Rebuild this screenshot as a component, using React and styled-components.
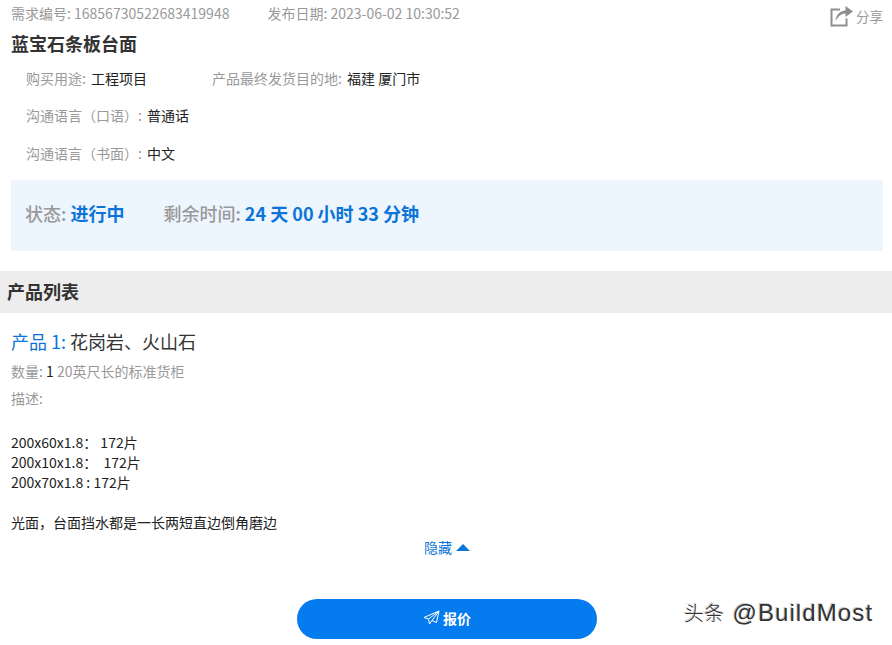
import React from "react";
import styled, { createGlobalStyle } from "styled-components";

const GlobalStyle = createGlobalStyle`
  html, body {
    margin: 0;
    padding: 0;
    background: #fff;
  }
  body {
    font-family: "Noto Sans CJK SC", "Noto Sans", sans-serif;
    overflow: hidden;
  }
`;

function ShareIcon() {
  return (
    <svg width="23" height="22" viewBox="0 0 23 22" fill="none">
      <path d="M10 4.500H1.500v16h15v-7" stroke="#8f8f8f" strokeWidth="2" />
      <path d="M5.500 16c.5-6 4-10 10-10.500V1L23 6.500l-7.500 5.500V8.500c-4 0-7.500 3-10 7.500z" fill="#8f8f8f" />
    </svg>
  );
}

function PlaneIcon() {
  return (
    <svg width="17" height="15" viewBox="0 0 17 15" fill="none" stroke="#fff" strokeWidth="1" strokeLinejoin="round">
      <path d="M16 1L1 7.500l4.500 1.500L16 1zM16 1l-2.500 11.500L9 10.500 6.500 14 5.500 9" />
      <path d="M9 10.500L16 1" />
    </svg>
  );
}

function App() {
  return (
    <Page>
      <GlobalStyle />
      <TopBar>
        <span>需求编号: 16856730522683419948</span>
        <span>发布日期: 2023-06-02 10:30:52</span>
        <ShareButton>
          <ShareIcon />
          分享
        </ShareButton>
      </TopBar>
      <Title>蓝宝石条板台面</Title>
      <InfoRow>
        <InfoItem $width="186px">
          购买用途: <strong>工程项目</strong>
        </InfoItem>
        <InfoItem>
          产品最终发货目的地: <strong>福建 厦门市</strong>
        </InfoItem>
      </InfoRow>
      <InfoRow>
        <InfoItem>
          沟通语言（口语）: <strong>普通话</strong>
        </InfoItem>
      </InfoRow>
      <InfoRow>
        <InfoItem>
          沟通语言（书面）: <strong>中文</strong>
        </InfoItem>
      </InfoRow>
      <StatusBox>
        <StatusItem>
          状态: <b>进行中</b>
        </StatusItem>
        <StatusItem>
          剩余时间: <b>24 天 00 小时 33 分钟</b>
        </StatusItem>
      </StatusBox>
      <SectionHeader>产品列表</SectionHeader>
      <Product>
        <ProductName>
          <em>产品 1:</em> 花岗岩、火山石
        </ProductName>
        <Quantity>
          数量: <strong>1</strong> 20英尺长的标准货柜
        </Quantity>
        <Quantity>描述:</Quantity>
        <Description>
          <p>
            200x60x1.8： 172片
            <br />
            200x10x1.8：&nbsp; 172片
            <br />
            200x70x1.8 : 172片
          </p>
          <p>光面，台面挡水都是一长两短直边倒角磨边</p>
        </Description>
      </Product>
      <HideToggle>
        隐藏 <Caret />
      </HideToggle>
      <QuoteRow>
        <QuoteButton>
          <PlaneIcon />
          报价
        </QuoteButton>
      </QuoteRow>
      <Watermark>
        头条 <WatermarkHandle>@BuildMost</WatermarkHandle>
      </Watermark>
    </Page>
  );
}

export default App;

const Page = styled.div`
  position: relative;
  width: 892px;
  height: 645px;
  overflow: hidden;
  background: #fff;
`;

const TopBar = styled.div`
  display: flex;
  gap: 38px;
  height: 26px;
  padding: 0 11px;
  align-items: center;
  font-size: 14px;
  color: #999;
  white-space: nowrap;
`;

const ShareButton = styled.div`
  display: flex;
  align-items: center;
  gap: 3px;
  margin-left: auto;
  margin-right: -2px;
  margin-top: 6px;
  font-size: 13.5px;
  color: #999;
`;

const Title = styled.h1`
  margin: 0;
  padding-left: 11px;
  height: 33px;
  font-size: 18px;
  line-height: 34px;
  font-weight: 700;
  color: #333;
`;

const InfoRow = styled.div`
  display: flex;
  height: 37.5px;
  padding-left: 26px;
  align-items: center;
`;

const InfoItem = styled.div`
  width: ${(p) => p.$width || "auto"};
  font-size: 14px;
  color: #999;
  white-space: nowrap;

  strong {
    margin-left: 2px;
    font-weight: 400;
    color: #222;
  }
`;

const StatusBox = styled.div`
  display: flex;
  gap: 40px;
  align-items: center;
  height: 71px;
  margin: 8px 9px 0 11px;
  padding: 0 0 5px 15px;
  box-sizing: border-box;
  background: #edf5fe;
`;

const StatusItem = styled.div`
  font-size: 18px;
  font-weight: 500;
  color: #999;
  margin-left: -1px;

  b {
    font-weight: 700;
    color: #0c74d8;
  }
`;

const SectionHeader = styled.h2`
  margin: 20.5px 0 0;
  height: 42px;
  padding-left: 7px;
  background: #ededed;
  font-size: 18px;
  line-height: 41px;
  font-weight: 700;
  color: #333;
`;

const Product = styled.div`
  padding: 15px 11px 0;
`;

const ProductName = styled.div`
  font-size: 18px;
  line-height: 27px;
  color: #333;

  em {
    font-style: normal;
    color: #0c74d8;
  }
`;

const Quantity = styled.div`
  margin-top: 5px;
  font-size: 14px;
  line-height: 22px;
  color: #999;

  strong {
    font-weight: 400;
    color: #222;
  }
`;

const Description = styled.div`
  font-size: 14px;
  line-height: 20px;
  color: #222;

  p {
    margin: 23px 0 0;
  }

  p + p {
    margin-top: 20px;
  }
`;

const HideToggle = styled.div`
  display: flex;
  align-items: center;
  justify-content: center;
  gap: 4px;
  height: 20px;
  margin-top: 5px;
  padding-left: 2px;
  font-size: 14px;
  color: #0c74d8;
`;

const Caret = styled.span`
  width: 0;
  height: 0;
  border-left: 7px solid transparent;
  border-right: 7px solid transparent;
  border-bottom: 7px solid #0c74d8;
`;

const QuoteRow = styled.div`
  display: flex;
  justify-content: center;
  margin-top: 42px;
  padding-left: 2px;
`;

const QuoteButton = styled.button`
  display: flex;
  align-items: center;
  justify-content: center;
  gap: 3px;
  width: 300px;
  height: 40px;
  padding: 0 0 3px;
  border: 0;
  border-radius: 20px;
  background: #047cf0;
  color: #fff;
  font-family: inherit;
  font-size: 14px;
  font-weight: 700;
`;

const Watermark = styled.div`
  position: absolute;
  left: 684px;
  top: 597px;
  font-size: 20px;
  line-height: 32px;
  font-weight: 300;
  color: #333;
  white-space: nowrap;
  text-shadow: 1px 1px 0 #fff, -1px -1px 0 #ccc;
`;

const WatermarkHandle = styled.span`
  margin-left: 4px;
  font-family: "Liberation Sans", sans-serif;
  font-size: 24px;
  letter-spacing: 1.1px;
`;
